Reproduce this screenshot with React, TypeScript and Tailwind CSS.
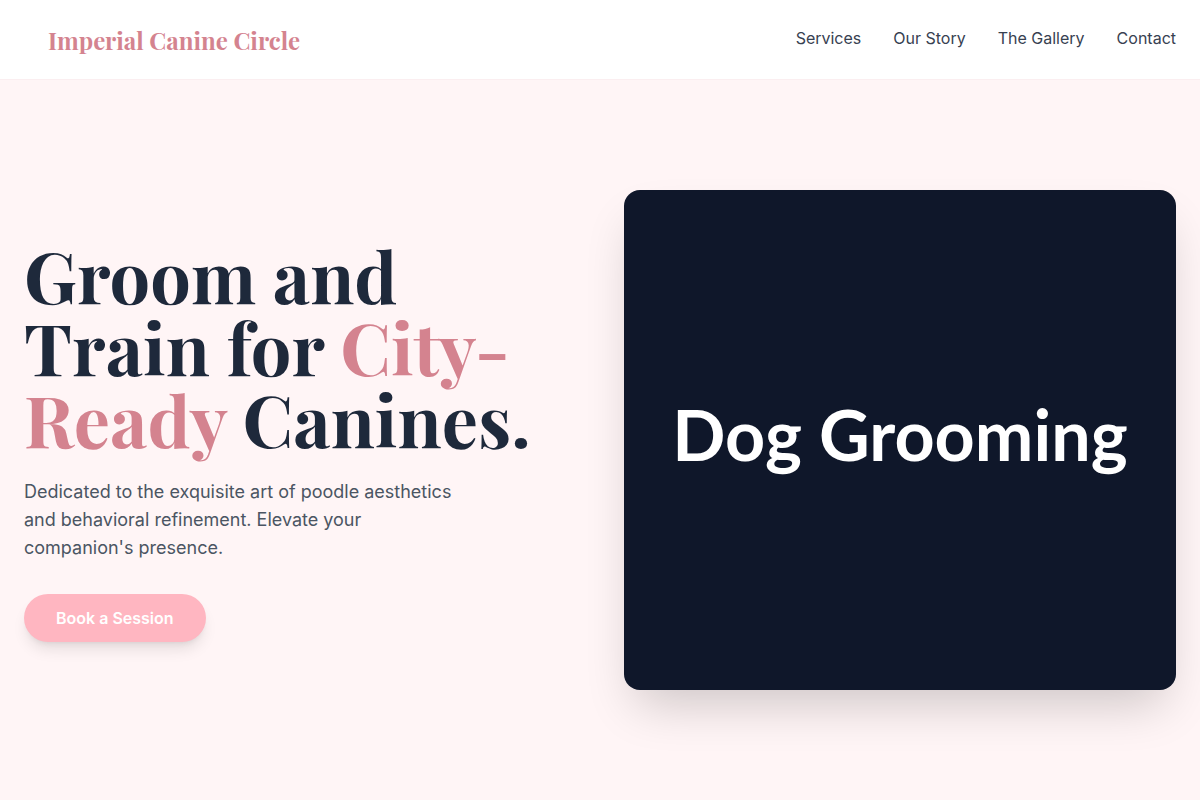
import React from "react";

const serif = "font-['Playfair_Display','DejaVu_Serif',serif]";
const sans = "font-['Inter','Liberation_Sans',sans-serif]";

const links = ["Services", "Our Story", "The Gallery", "Contact"];

function Header() {
  return (
    <header className="h-20 flex items-center justify-between pl-12 pr-6 bg-white/95 border-b border-[#fbeef0]">
      <a href="#" className={`${serif} text-2xl font-bold text-[#d4838f]`}>
        Imperial Canine Circle
      </a>
      <nav className="flex items-center gap-8 pb-1">
        {links.map((l) => (
          <a key={l} href="#" className={`${sans} text-base text-[#374151]`}>
            {l}
          </a>
        ))}
      </nav>
    </header>
  );
}

export default function App() {
  return (
    <div className={`min-h-screen bg-[#fff5f6] ${sans}`}>
      <Header />
      <main className="min-h-[720px] grid grid-cols-2 gap-12 px-6 items-center">
        <div>
          <h1 className={`${serif} text-7xl leading-none font-bold text-[#1e293b] mb-6`}>
            Groom and Train for <span className="text-[#d4838f]">City-Ready</span> Canines.
          </h1>
          <p className="text-lg leading-7 text-[#4b5563] max-w-md mb-8">
            Dedicated to the exquisite art of poodle aesthetics and behavioral refinement. Elevate your companion's presence.
          </p>
          <button className="h-12 px-8 rounded-full bg-[#ffb6c1] text-white font-semibold text-base shadow-lg shadow-black/10">
            Book a Session
          </button>
        </div>
        <div className="h-[500px] rounded-2xl bg-[#0f172a] shadow-2xl shadow-black/20 flex items-center justify-center pb-3">
          <span className="font-['Lato',sans-serif] text-[70px] leading-none font-bold text-white">Dog Grooming</span>
        </div>
      </main>
    </div>
  );
}
